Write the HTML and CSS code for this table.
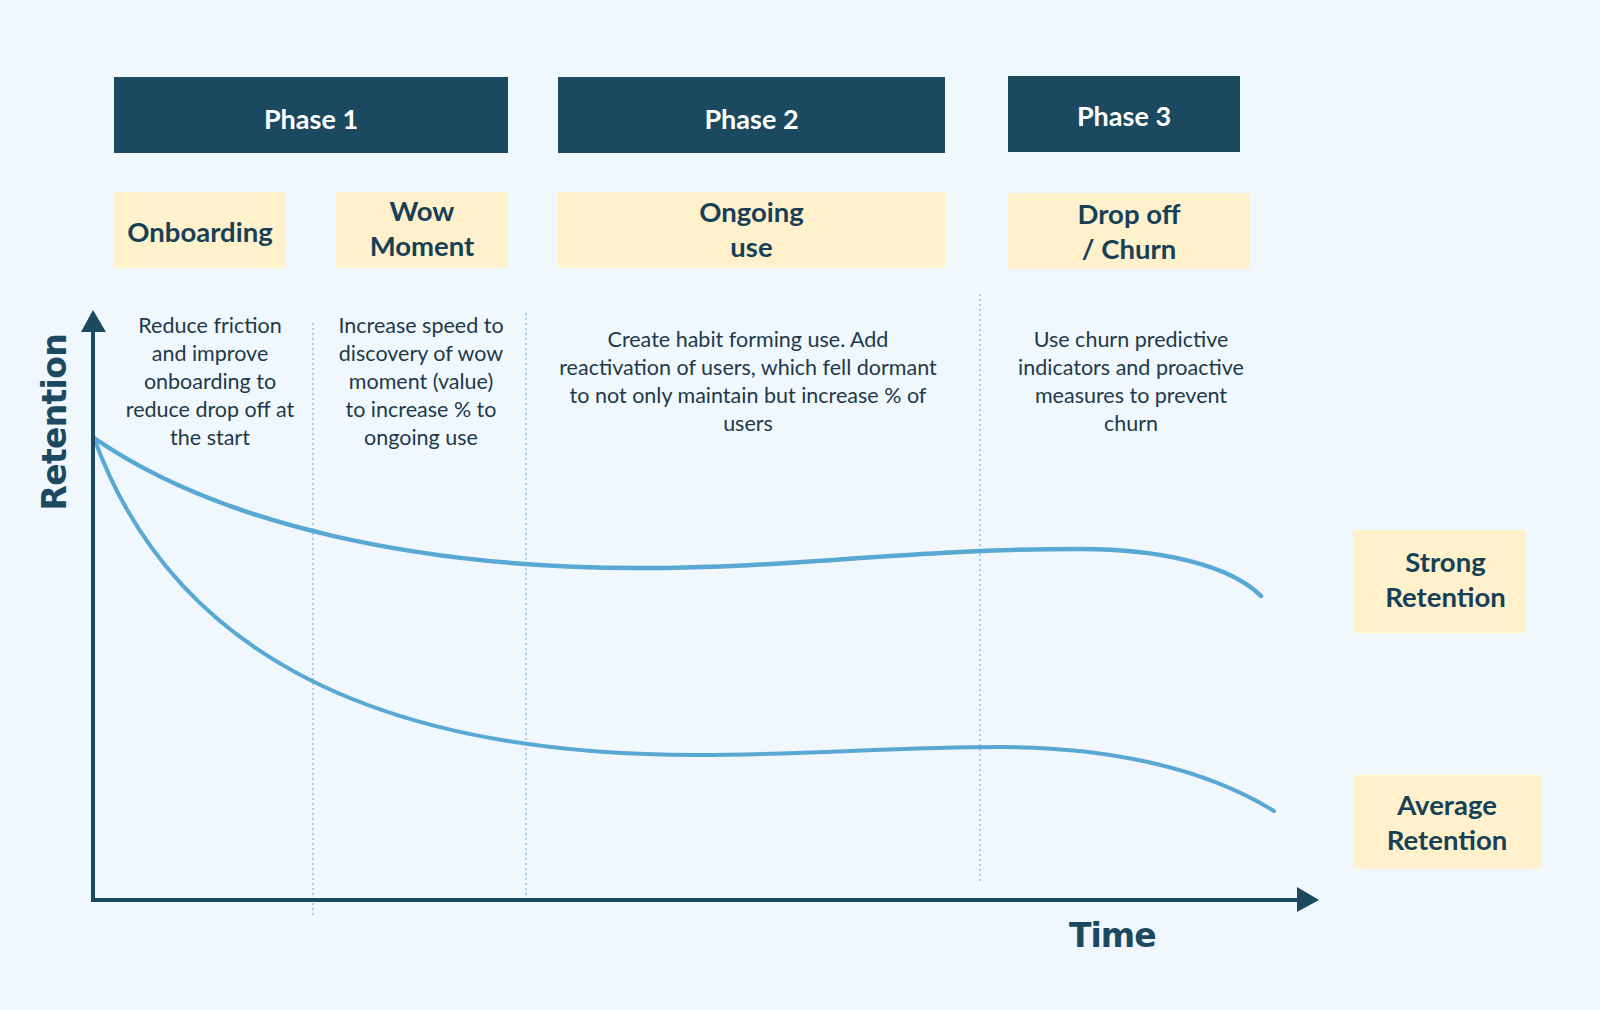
FILE: index.html
```html
<!DOCTYPE html>
<html lang="en">
<head>
<meta charset="utf-8">
<title>Retention phases</title>
<link rel="stylesheet" href="styles.css">
</head>
<body>
<main class="diagram">
  <svg class="chart" viewBox="0 0 1600 1010" width="1600" height="1010" aria-hidden="true">
    <g class="guides">
      <line x1="313" y1="323" x2="313" y2="915"/>
      <line x1="526" y1="313" x2="526" y2="903"/>
      <line x1="980" y1="294" x2="980" y2="884"/>
    </g>
    <g class="curves">
      <path class="curve-strong" d="M94 438 C220 525 420 568 640 568 C800 568 900 549 1081 549 C1160 549 1230 565 1261 596"/>
      <path class="curve-average" d="M94 438 C160 620 330 756 700 755 C800 755 900 747 1000 747 C1100 747 1200 765 1274 811"/>
    </g>
    <g class="axes">
      <line x1="93" y1="328" x2="93" y2="902"/>
      <line x1="91" y1="900" x2="1300" y2="900"/>
      <polygon points="93,310 81,332 106,332"/>
      <polygon points="1319,900 1297,887 1297,912"/>
    </g>
  </svg>

  <section class="stages">
    <div class="phase phase-1">Phase 1</div>
    <div class="phase phase-2">Phase 2</div>
    <div class="phase phase-3">Phase 3</div>
    <div class="step step-onboarding">Onboarding</div>
    <div class="step step-wow">Wow<br>Moment</div>
    <div class="step step-ongoing">Ongoing<br>use</div>
    <div class="step step-drop">Drop off<br>/ Churn</div>
  </section>

  <section class="notes">
    <p class="note">Reduce friction<br>and improve<br>onboarding to<br>reduce drop off at<br>the start</p>
    <p class="note">Increase speed to<br>discovery of wow<br>moment (value)<br>to increase % to<br>ongoing use</p>
    <p class="note">Create habit forming use. Add<br>reactivation of users, which fell dormant<br>to not only maintain but increase % of<br>users</p>
    <p class="note">Use churn predictive<br>indicators and proactive<br>measures to prevent<br>churn</p>
  </section>

  <div class="outcome outcome-strong">Strong<br>Retention</div>
  <div class="outcome outcome-average">Average<br>Retention</div>

  <div class="axis-label axis-y">Retention</div>
  <div class="axis-label axis-x">Time</div>
</main>
</body>
</html>
```

FILE: styles.css
```css
html, body {
  margin: 0;
  padding: 0;
  background: #f0f7fd;
}

.diagram {
  position: relative;
  width: 1600px;
  height: 1010px;
  overflow: hidden;
  background: #f0f7fd;
  font-family: "Lato", "Noto Sans", "Liberation Sans", sans-serif;
  color: #1b3e55;
}

.chart {
  position: absolute;
  left: 0;
  top: 0;
  display: block;
}

.guides line {
  stroke: #5aa9d6;
  stroke-width: 1;
  stroke-dasharray: 2 3;
}

.curves path {
  fill: none;
  stroke: #58a8d4;
  stroke-linecap: round;
}

.curve-strong { stroke-width: 4.5; }
.curve-average { stroke-width: 4; }

.axes line {
  stroke: #1b4960;
  stroke-width: 4;
}

.axes polygon {
  fill: #1b4960;
}

/* Phase & step header grid */
.stages {
  position: relative;
  display: grid;
  grid-template-columns: 172px 50px 172px 50px 387px 63px 232px 10px;
  grid-template-rows: 76px 76px;
  row-gap: 39px;
  margin: 0 0 0 114px;
  padding-top: 77px;
}

.phase {
  display: flex;
  align-items: center;
  justify-content: center;
  padding-top: 6px;
  box-sizing: border-box;
  background: #1b4960;
  color: #ffffff;
  font-weight: 700;
  font-size: 27px;
}

.phase-1 { grid-column: 1 / 4; grid-row: 1; }
.phase-2 { grid-column: 5 / 6; grid-row: 1; }
.phase-3 {
  grid-column: 7 / 8;
  grid-row: 1;
  margin: -1px 0 1px;
  padding-top: 2px;
}

.step {
  display: flex;
  align-items: center;
  justify-content: center;
  text-align: center;
  box-sizing: border-box;
  background: #fff1cb;
  color: #173f56;
  font-weight: 700;
  font-size: 27.5px;
  line-height: 35px;
  grid-row: 2;
}

.step-onboarding { grid-column: 1 / 2; padding-top: 2px; }
.step-wow { grid-column: 3 / 4; padding-bottom: 5px; }
.step-ongoing { grid-column: 5 / 6; padding-bottom: 2px; }
.step-drop { grid-column: 7 / 9; margin: 1px 0 -1px; }

/* Descriptions under each step */
.notes {
  position: relative;
  display: grid;
  grid-template-columns: 180px 242px 412px 354px;
  align-items: center;
  margin: 43px 0 0 120px;
}

.note {
  margin: 0;
  text-align: center;
  white-space: nowrap;
  font-size: 21.5px;
  line-height: 28px;
  color: #21394b;
}

/* Outcome labels next to curve ends */
.outcome {
  position: absolute;
  left: 1353px;
  display: flex;
  align-items: center;
  justify-content: center;
  text-align: center;
  box-sizing: border-box;
  background: #fff1cb;
  color: #173f56;
  font-weight: 700;
  font-size: 27.5px;
  line-height: 35px;
}

.outcome-strong {
  top: 530px;
  width: 173px;
  height: 103px;
  padding: 0 0 5px 12px;
}

.outcome-average {
  top: 775px;
  width: 188px;
  height: 94px;
}

/* Axis titles */
.axis-label {
  position: absolute;
  font-family: "DejaVu Sans", "Liberation Sans", sans-serif;
  font-weight: 700;
  font-size: 33px;
  line-height: 1;
  color: #1b4960;
  white-space: nowrap;
}

.axis-y {
  left: 38px;
  top: 334px;
  writing-mode: vertical-rl;
  transform: rotate(180deg);
  letter-spacing: -0.7px;
}

.axis-x {
  left: 1069px;
  top: 919px;
  letter-spacing: -1px;
}
```
